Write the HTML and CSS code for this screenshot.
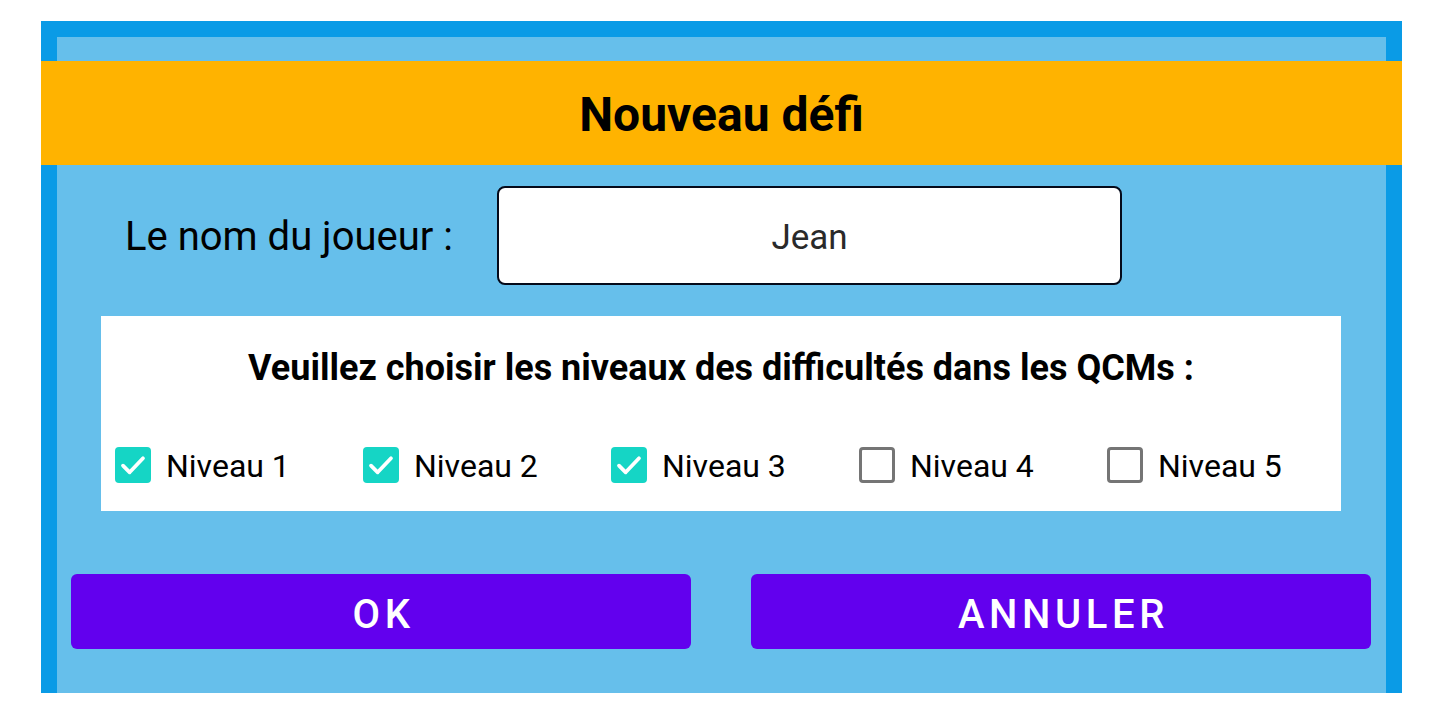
FILE: index.html
```html
<!DOCTYPE html>
<html lang="fr">
<head>
<meta charset="utf-8">
<title>Nouveau défi</title>
<link rel="stylesheet" href="styles.css">
</head>
<body>
<div class="dialog">
  <div class="inner">
    <header class="title-bar"><h1 class="title">Nouveau défi</h1></header>
    <div class="name-row">
      <label class="name-label" for="player">Le nom du joueur :</label>
      <div class="name-input" id="player">Jean</div>
    </div>
    <section class="levels">
      <h2 class="levels-title">Veuillez choisir les niveaux des difficultés dans les QCMs :</h2>
      <div class="level-list">
        <div class="level"><span class="box checked"><svg viewBox="0 0 24 24" width="32" height="32"><path d="M4.5 12.5l5 5 10-10.5" fill="none" stroke="#fff" stroke-width="2.8" stroke-linecap="round" stroke-linejoin="round"/></svg></span><span class="level-text">Niveau 1</span></div>
        <div class="level"><span class="box checked"><svg viewBox="0 0 24 24" width="32" height="32"><path d="M4.5 12.5l5 5 10-10.5" fill="none" stroke="#fff" stroke-width="2.8" stroke-linecap="round" stroke-linejoin="round"/></svg></span><span class="level-text">Niveau 2</span></div>
        <div class="level"><span class="box checked"><svg viewBox="0 0 24 24" width="32" height="32"><path d="M4.5 12.5l5 5 10-10.5" fill="none" stroke="#fff" stroke-width="2.8" stroke-linecap="round" stroke-linejoin="round"/></svg></span><span class="level-text">Niveau 3</span></div>
        <div class="level"><span class="box"></span><span class="level-text">Niveau 4</span></div>
        <div class="level"><span class="box"></span><span class="level-text">Niveau 5</span></div>
      </div>
    </section>
    <div class="actions">
      <button class="btn">OK</button>
      <button class="btn">ANNULER</button>
    </div>
  </div>
</div>
</body>
</html>
```
FILE: styles.css
```css
* { box-sizing: border-box; }
html, body { margin: 0; padding: 0; background: #ffffff; }
body { font-family: Roboto, "Liberation Sans", sans-serif; }

.dialog {
  margin: 21px 0 0 41px;
  width: 1361px;
  height: 672px;
  background: #0a9be6;
  padding: 16px 16px 0 16px;
}
.inner {
  height: 100%;
  background: #66bfeb;
  padding-top: 24px;
  display: flex;
  flex-direction: column;
}
.title-bar {
  margin: 0 -16px;
  height: 104px;
  background: #ffb300;
  display: flex;
  align-items: center;
  justify-content: center;
  padding-top: 3px;
}
.title {
  margin: 0;
  font-size: 48px;
  font-weight: 700;
  color: #000;
}
.name-row {
  margin-top: 21px;
  display: flex;
  align-items: center;
  height: 99px;
}
.name-label {
  margin-left: 68px;
  width: 372px;
  font-size: 40px;
  color: #000;
  padding-top: 2px;
}
.name-input {
  width: 625px;
  height: 99px;
  background: #fff;
  border: 2px solid #050a1a;
  border-radius: 8px;
  display: flex;
  align-items: center;
  justify-content: center;
  font-size: 35px;
  color: #2a2a2a;
  padding-top: 3px;
}
.levels {
  margin: 31px 0 0 44px;
  width: 1240px;
  height: 195px;
  background: #fff;
  display: flex;
  flex-direction: column;
}
.levels-title {
  margin: 30px 0 0;
  text-align: center;
  font-size: 36px;
  font-weight: 700;
  color: #000;
  line-height: 44px;
}
.level-list {
  margin-top: 55px;
  display: grid;
  grid-template-columns: repeat(5, 248px);
}
.level {
  display: flex;
  align-items: center;
  padding-left: 14px;
  gap: 15px;
}
.box {
  width: 36px;
  height: 36px;
  border: 3.5px solid #757575;
  border-radius: 4px;
  display: flex;
  align-items: center;
  justify-content: center;
  flex: none;
}
.box.checked {
  background: #15d5c5;
  border: none;
}
.level-text {
  font-size: 32px;
  color: #000;
  padding-top: 2px;
}
.actions {
  margin-top: 63px;
  display: flex;
  padding-left: 14px;
  gap: 60px;
}
.btn {
  width: 620px;
  height: 75px;
  border: none;
  border-radius: 6px;
  background: #6200ee;
  color: #fff;
  font-family: Roboto, "Liberation Sans", sans-serif;
  font-size: 40px;
  font-weight: 500;
  letter-spacing: 4.6px;
  padding: 5px 0 0 5px;
}
```
